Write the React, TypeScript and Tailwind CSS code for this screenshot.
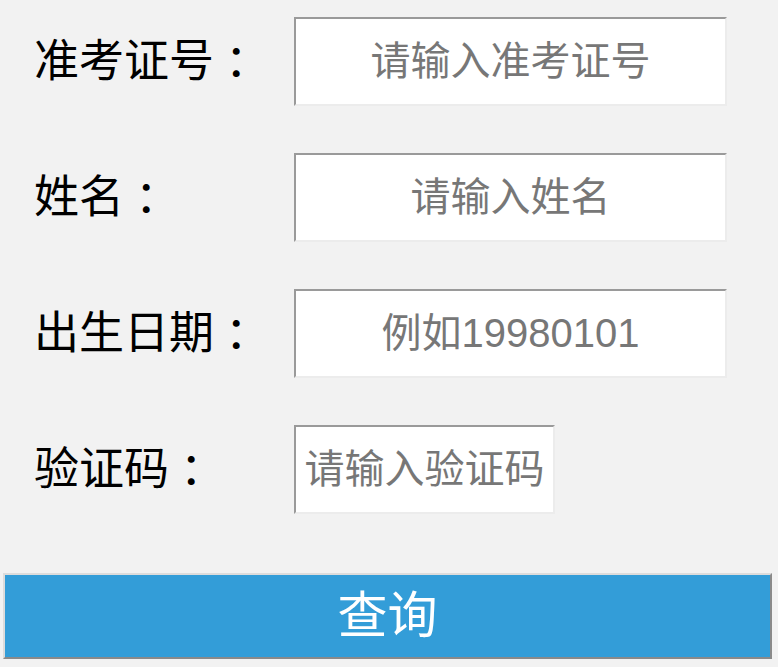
import { useState } from 'react';

const fields = [
  { name: 'zkzh', label: '准考证号', placeholder: '请输入准考证号', width: 'w-[433px]' },
  { name: 'xm', label: '姓名', placeholder: '请输入姓名', width: 'w-[433px]' },
  { name: 'csrq', label: '出生日期', placeholder: '例如19980101', width: 'w-[433px]' },
  { name: 'yzm', label: '验证码', placeholder: '请输入验证码', width: 'w-[261px]' },
];

function App() {
  const [values, setValues] = useState<Record<string, string>>({});

  return (
    <div
      className="min-h-[667px] w-[778px] bg-[#f2f2f2] pt-[17px]"
      style={{ fontFamily: '"Liberation Sans", "Noto Sans CJK SC", sans-serif' }}
    >
      <div className="flex flex-col gap-[47px]">
        {fields.map((f) => (
          <div key={f.name} className="flex items-center">
            <label htmlFor={f.name} className="w-[294px] pl-[34px] text-[45px] leading-none text-black">
              {f.label}
              <span className="ml-[11px]">：</span>
            </label>
            <input
              id={f.name}
              name={f.name}
              value={values[f.name] ?? ''}
              onChange={(e) => setValues((s) => ({ ...s, [f.name]: e.target.value }))}
              placeholder={f.placeholder}
              className={`${f.width} h-[89px] border-2 border-t-[#9a9a9a] border-l-[#9a9a9a] border-r-[#ececec] border-b-[#ececec] bg-white text-center text-[40px] text-[#777] outline-0 placeholder:text-[#777]`}
            />
          </div>
        ))}
      </div>
      <button
        type="button"
        className="mt-[59px] ml-[3px] block h-[86px] w-[769px] border-2 border-t-[#dcdcdc] border-l-[#dcdcdc] border-r-[#8a8a8a] border-b-[#8a8a8a] bg-[#339dd8] text-[50px] leading-none text-white"
      >
        查询
      </button>
    </div>
  );
}

export default App;
